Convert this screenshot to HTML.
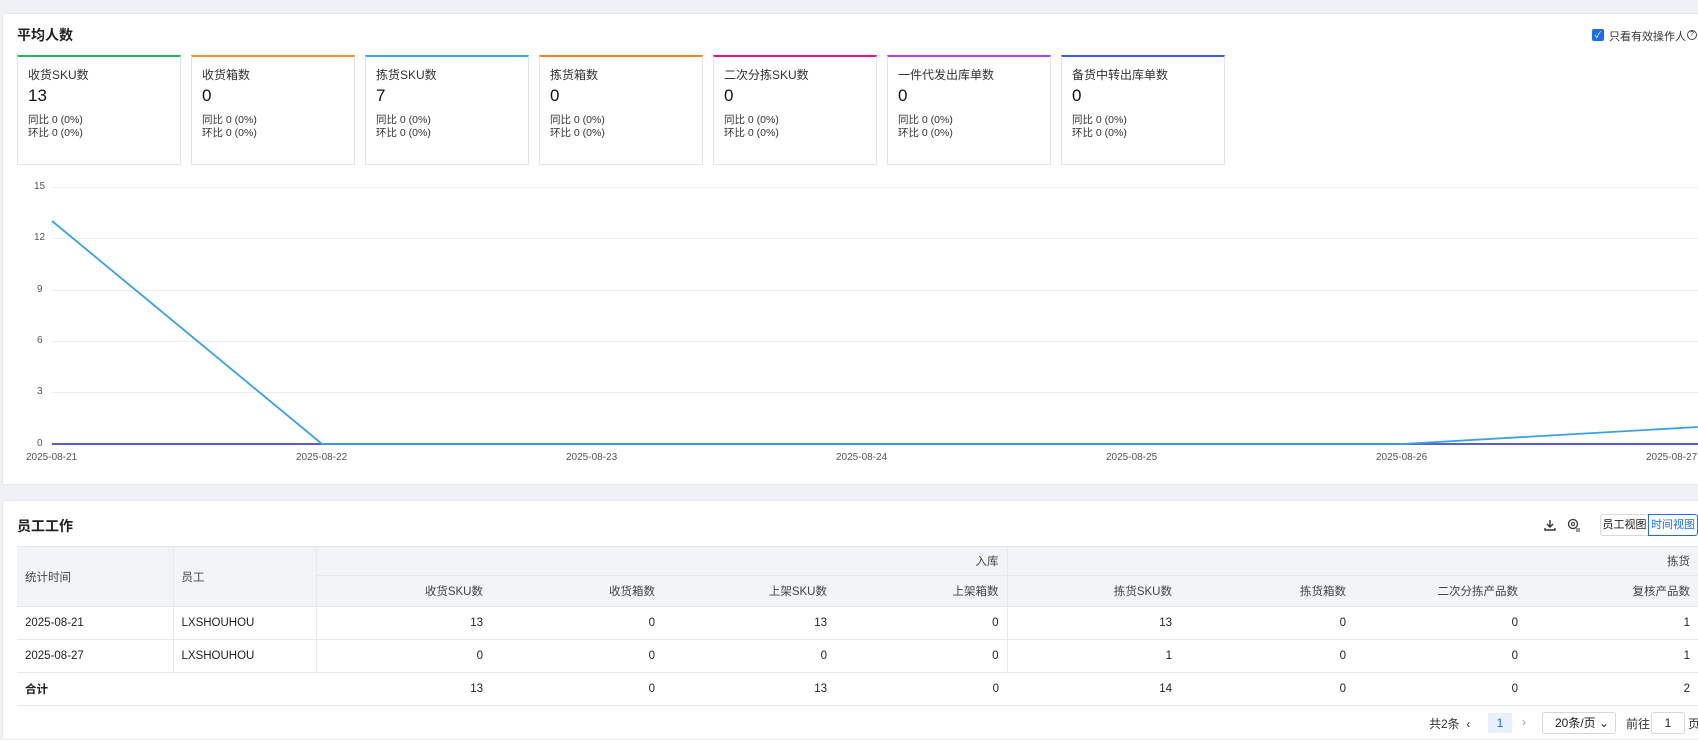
<!DOCTYPE html>
<html><head><meta charset="utf-8"><style>
*{box-sizing:border-box;margin:0;padding:0}
body{width:1698px;height:723px;overflow:hidden;background:#f0f1f4;font-family:"Liberation Sans","Noto Sans CJK SC",sans-serif;color:#222;position:relative}
.abs{position:absolute}
.panel{position:absolute;background:#fff;border:1px solid #e6e8ec;border-radius:3px}
.title{position:absolute;font-size:14px;font-weight:bold;color:#222}
.card{position:absolute;top:55px;width:164px;height:110px;border:1px solid #e2e4e8;border-top-width:2px;background:#fff}
.card .l{position:absolute;left:10px;top:9px;font-size:12px;color:#333}
.card .v{position:absolute;left:10px;top:29px;font-size:17px;color:#111}
.card .s{position:absolute;left:10px;top:57px;font-size:10.5px;line-height:13px;color:#333}
.ax{position:absolute;font-size:10px;color:#555}
table{position:absolute;left:17px;top:546px;width:1681px;border-collapse:collapse;font-size:11.5px;table-layout:fixed}
td,th{border-bottom:1px solid #e6e8ec;font-weight:normal;padding:0 8px;white-space:nowrap;overflow:hidden}
th{background:#f3f4f7;color:#444;text-align:right}
td{text-align:right;height:33px;color:#222}
td.lft,th.lft{text-align:left}
.vb{border-right:1px solid #e6e8ec}
</style></head><body>
<div class="panel" style="left:2px;top:13px;width:1710px;height:472px"></div>
<div class="title" style="left:17px;top:25px">平均人数</div>
<div class="abs" style="left:1592px;top:29px;width:12px;height:12px;background:#1b6cf2;border-radius:2px;color:#fff;font-size:9px;line-height:12px;text-align:center">✓</div>
<div class="abs" style="left:1609px;top:28px;font-size:11px;color:#333">只看有效操作人</div>
<div class="abs" style="left:1687px;top:30px;width:10px;height:10px;border:1px solid #444;border-radius:50%;font-size:7px;line-height:8px;text-align:center">?</div>

<div class="card" style="left:17px;border-top-color:#28b463"><div class="l">收货SKU数</div><div class="v">13</div><div class="s">同比 0 (0%)<br>环比 0 (0%)</div></div>
<div class="card" style="left:191px;border-top-color:#f7902b"><div class="l">收货箱数</div><div class="v">0</div><div class="s">同比 0 (0%)<br>环比 0 (0%)</div></div>
<div class="card" style="left:365px;border-top-color:#3ea6f5"><div class="l">拣货SKU数</div><div class="v">7</div><div class="s">同比 0 (0%)<br>环比 0 (0%)</div></div>
<div class="card" style="left:539px;border-top-color:#f5832b"><div class="l">拣货箱数</div><div class="v">0</div><div class="s">同比 0 (0%)<br>环比 0 (0%)</div></div>
<div class="card" style="left:713px;border-top-color:#e6157f"><div class="l">二次分拣SKU数</div><div class="v">0</div><div class="s">同比 0 (0%)<br>环比 0 (0%)</div></div>
<div class="card" style="left:887px;border-top-color:#b142ef"><div class="l">一件代发出库单数</div><div class="v">0</div><div class="s">同比 0 (0%)<br>环比 0 (0%)</div></div>
<div class="card" style="left:1061px;border-top-color:#3b5bf0"><div class="l">备货中转出库单数</div><div class="v">0</div><div class="s">同比 0 (0%)<br>环比 0 (0%)</div></div>

<svg class="abs" style="left:0;top:0" width="1698" height="485">
<g stroke="#ebedf2" stroke-width="1">
<line x1="52" y1="187.5" x2="1698" y2="187.5"/><line x1="52" y1="238.5" x2="1698" y2="238.5"/>
<line x1="52" y1="290.5" x2="1698" y2="290.5"/><line x1="52" y1="341.5" x2="1698" y2="341.5"/>
<line x1="52" y1="392.5" x2="1698" y2="392.5"/>
</g>
<line x1="52" y1="444" x2="1698" y2="444" stroke="#5a5ec8" stroke-width="2"/>
<polyline points="52,221 322,444 1402,444 1698,427" fill="none" stroke="#3aa0ea" stroke-width="1.8"/>
</svg>
<div class="ax" style="left:34px;top:181px">15</div>
<div class="ax" style="left:34px;top:232px">12</div>
<div class="ax" style="left:37px;top:284px">9</div>
<div class="ax" style="left:37px;top:335px">6</div>
<div class="ax" style="left:37px;top:386px">3</div>
<div class="ax" style="left:37px;top:438px">0</div>
<div class="ax" style="left:26px;top:452px">2025-08-21</div>
<div class="ax" style="left:296px;top:452px">2025-08-22</div>
<div class="ax" style="left:566px;top:452px">2025-08-23</div>
<div class="ax" style="left:836px;top:452px">2025-08-24</div>
<div class="ax" style="left:1106px;top:452px">2025-08-25</div>
<div class="ax" style="left:1376px;top:452px">2025-08-26</div>
<div class="ax" style="left:1646px;top:452px">2025-08-27</div>

<div class="panel" style="left:2px;top:500px;width:1710px;height:240px"></div>
<div class="title" style="left:17px;top:516px">员工工作</div>
<svg class="abs" style="left:1543px;top:518px" width="14" height="14"><path d="M7 2v7M4 6l3 3 3-3M2 10v2h10v-2" fill="none" stroke="#333" stroke-width="1.4"/></svg>
<svg class="abs" style="left:1567px;top:518px" width="14" height="14"><circle cx="6" cy="6" r="4.5" fill="none" stroke="#333" stroke-width="1.3"/><circle cx="6" cy="6" r="1.5" fill="none" stroke="#333"/><path d="M9 11h4M9 13h4" stroke="#333"/></svg>
<div class="abs" style="left:1600px;top:514px;width:49px;height:22px;border:1px solid #d6d8dc;border-radius:3px 0 0 3px;font-size:11px;line-height:20px;text-align:center">员工视图</div>
<div class="abs" style="left:1648px;top:514px;width:50px;height:22px;border:1px solid #1b6cf2;border-radius:0 3px 3px 0;font-size:11px;line-height:20px;text-align:center;color:#1b6cf2">时间视图</div>

<table>
<colgroup><col style="width:156px"><col style="width:143px"><col style="width:175px"><col style="width:172px"><col style="width:172px"><col style="width:172px"><col style="width:173px"><col style="width:174px"><col style="width:172px"><col style="width:172px"></colgroup>
<tr style="height:29px"><th class="lft vb" rowspan="2" style="border-top:1px solid #e6e8ec">统计时间</th><th class="lft vb" rowspan="2" style="border-top:1px solid #e6e8ec">员工</th><th colspan="4" class="vb" style="border-top:1px solid #e6e8ec">入库</th><th colspan="4" style="border-top:1px solid #e6e8ec">拣货</th></tr>
<tr style="height:31px"><th>收货SKU数</th><th>收货箱数</th><th>上架SKU数</th><th class="vb">上架箱数</th><th>拣货SKU数</th><th>拣货箱数</th><th>二次分拣产品数</th><th>复核产品数</th></tr>
<tr><td class="lft vb">2025-08-21</td><td class="lft vb">LXSHOUHOU</td><td>13</td><td>0</td><td>13</td><td class="vb">0</td><td>13</td><td>0</td><td>0</td><td>1</td></tr>
<tr><td class="lft vb">2025-08-27</td><td class="lft vb">LXSHOUHOU</td><td>0</td><td>0</td><td>0</td><td class="vb">0</td><td>1</td><td>0</td><td>0</td><td>1</td></tr>
<tr><td class="lft" style="font-weight:bold">合计</td><td></td><td>13</td><td>0</td><td>13</td><td>0</td><td>14</td><td>0</td><td>0</td><td>2</td></tr>
</table>
<div class="abs" style="left:1429px;top:715px;font-size:12px;color:#333">共2条 &nbsp;‹</div>
<div class="abs" style="left:1488px;top:713px;width:24px;height:20px;background:#e8effd;color:#1b6cf2;font-size:12px;text-align:center;line-height:20px">1</div>
<div class="abs" style="left:1522px;top:715px;font-size:12px;color:#999">›</div>
<div class="abs" style="left:1542px;top:712px;width:74px;height:22px;border:1px solid #d6d8dc;border-radius:3px;font-size:12px;padding-left:12px;line-height:20px">20条/页 ⌄</div>
<div class="abs" style="left:1626px;top:715px;font-size:12px;color:#333">前往</div>
<div class="abs" style="left:1651px;top:712px;width:34px;height:22px;border:1px solid #d6d8dc;border-radius:3px;font-size:12px;text-align:center;line-height:20px">1</div>
<div class="abs" style="left:1688px;top:715px;font-size:12px;color:#333">页</div>
</body></html>
